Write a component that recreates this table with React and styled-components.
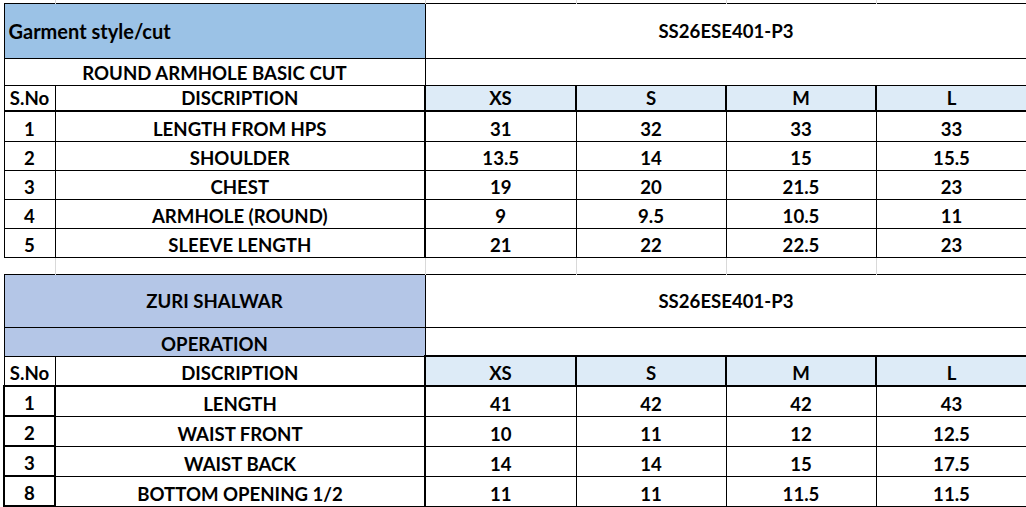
import React from 'react';
import styled, { createGlobalStyle } from 'styled-components';

const GlobalStyle = createGlobalStyle`
  html, body {
    margin: 0;
    padding: 0;
    background: #fff;
    overflow: hidden;
  }
  body {
    font-family: Lato, "Liberation Sans", sans-serif;
    color: #000;
  }
`;

const GRID = '#d9d9d9';
const INK = '#000';

const Sheet = styled.table`
  border-collapse: collapse;
  table-layout: fixed;
  width: 1023px;
  margin-left: 3px;
  font-weight: 700;
  font-size: 18.6px;
  line-height: 22px;
`;

const Row = styled.tr`
  height: ${p => p.$h}px;
`;

const Cell = styled.td`
  padding: ${p => (p.$middle ? '1px 0 0' : '0 0 1px')};
  text-align: ${p => (p.$left ? 'left' : 'center')};
  padding-left: ${p => (p.$left ? '4px' : '0')};
  vertical-align: ${p => (p.$middle ? 'middle' : 'bottom')};
  font-size: ${p => (p.$left ? '20px' : 'inherit')};
  white-space: nowrap;
  overflow: hidden;
  background: ${p => p.$bg || '#fff'};
  border: 1px solid ${INK};
  border-left-width: ${p => (p.$thickL ? 2 : 1)}px;
  border-right-width: ${p => (p.$thickR ? 2 : 1)}px;
  border-top-width: ${p => (p.$thickT ? 2 : 1)}px;
  border-bottom-width: ${p => (p.$thickB ? 2 : 1)}px;
`;

// empty spreadsheet cells between the two blocks, only the faint gridlines show
const GapCell = styled.td`
  padding: 0;
  border: none;
  border-right: 1px solid ${GRID};
  background: #fff;
`;

const BLUE = '#9bc2e6';
const SOFT_BLUE = '#b4c6e7';
const HEAD_BLUE = '#ddebf7';

const sizes = ['XS', 'S', 'M', 'L'];

const bodice = [
  ['1', 'LENGTH FROM HPS', ['31', '32', '33', '33']],
  ['2', 'SHOULDER', ['13.5', '14', '15', '15.5']],
  ['3', 'CHEST', ['19', '20', '21.5', '23']],
  ['4', 'ARMHOLE (ROUND)', ['9', '9.5', '10.5', '11']],
  ['5', 'SLEEVE LENGTH', ['21', '22', '22.5', '23']],
];

const shalwar = [
  ['1', 'LENGTH', ['41', '42', '42', '43']],
  ['2', 'WAIST FRONT', ['10', '11', '12', '12.5']],
  ['3', 'WAIST BACK', ['14', '14', '15', '17.5']],
  ['8', 'BOTTOM OPENING 1/2', ['11', '11', '11.5', '11.5']],
];

const GapRow = ({ h }) => (
  <Row $h={h}>
    {[0, 1, 2, 3, 4, 5].map(i => <GapCell key={i} />)}
  </Row>
);

const SizeHeader = ({ h, boxed }) => (
  <Row $h={h}>
    <Cell $thickB>S.No</Cell>
    <Cell $thickB $thickR>DISCRIPTION</Cell>
    {sizes.map(s => (
      <Cell key={s} $bg={HEAD_BLUE} $thickL $thickR $thickB $thickT={boxed}>
        {s}
      </Cell>
    ))}
  </Row>
);

const MeasureRow = ({ row, h, boxed }) => {
  const [no, label, values] = row;
  return (
    <Row $h={h}>
      <Cell $thickL={boxed} $thickR={boxed} $thickB={boxed}>{no}</Cell>
      <Cell $thickR>{label}</Cell>
      {values.map((v, i) => <Cell key={i}>{v}</Cell>)}
    </Row>
  );
};

export default function App() {
  return (
    <>
      <GlobalStyle />
      <Sheet>
        <colgroup>
          <col style={{ width: 51 }} />
          <col style={{ width: 370 }} />
          <col style={{ width: 151 }} />
          <col style={{ width: 150 }} />
          <col style={{ width: 150 }} />
          <col style={{ width: 151 }} />
        </colgroup>
        <tbody>
          <GapRow h={3} />

          <Row $h={55}>
            <Cell colSpan={2} $bg={BLUE} $left $middle>Garment style/cut</Cell>
            <Cell colSpan={4} $middle>SS26ESE401-P3</Cell>
          </Row>
          <Row $h={27}>
            <Cell colSpan={2}>ROUND ARMHOLE BASIC CUT</Cell>
            <Cell colSpan={4} />
          </Row>
          <SizeHeader h={26} />
          {bodice.map((r, i) => (
            <MeasureRow key={r[1]} row={r} h={i === 0 ? 30 : 29} />
          ))}

          <GapRow h={17} />

          <Row $h={53}>
            <Cell colSpan={2} $bg={SOFT_BLUE} $middle>ZURI SHALWAR</Cell>
            <Cell colSpan={4} $middle>SS26ESE401-P3</Cell>
          </Row>
          <Row $h={29}>
            <Cell colSpan={2} $bg={SOFT_BLUE}>OPERATION</Cell>
            <Cell colSpan={4} />
          </Row>
          <SizeHeader h={30} boxed />
          {shalwar.map(r => (
            <MeasureRow key={r[1]} row={r} h={30} boxed />
          ))}
        </tbody>
      </Sheet>
    </>
  );
}
